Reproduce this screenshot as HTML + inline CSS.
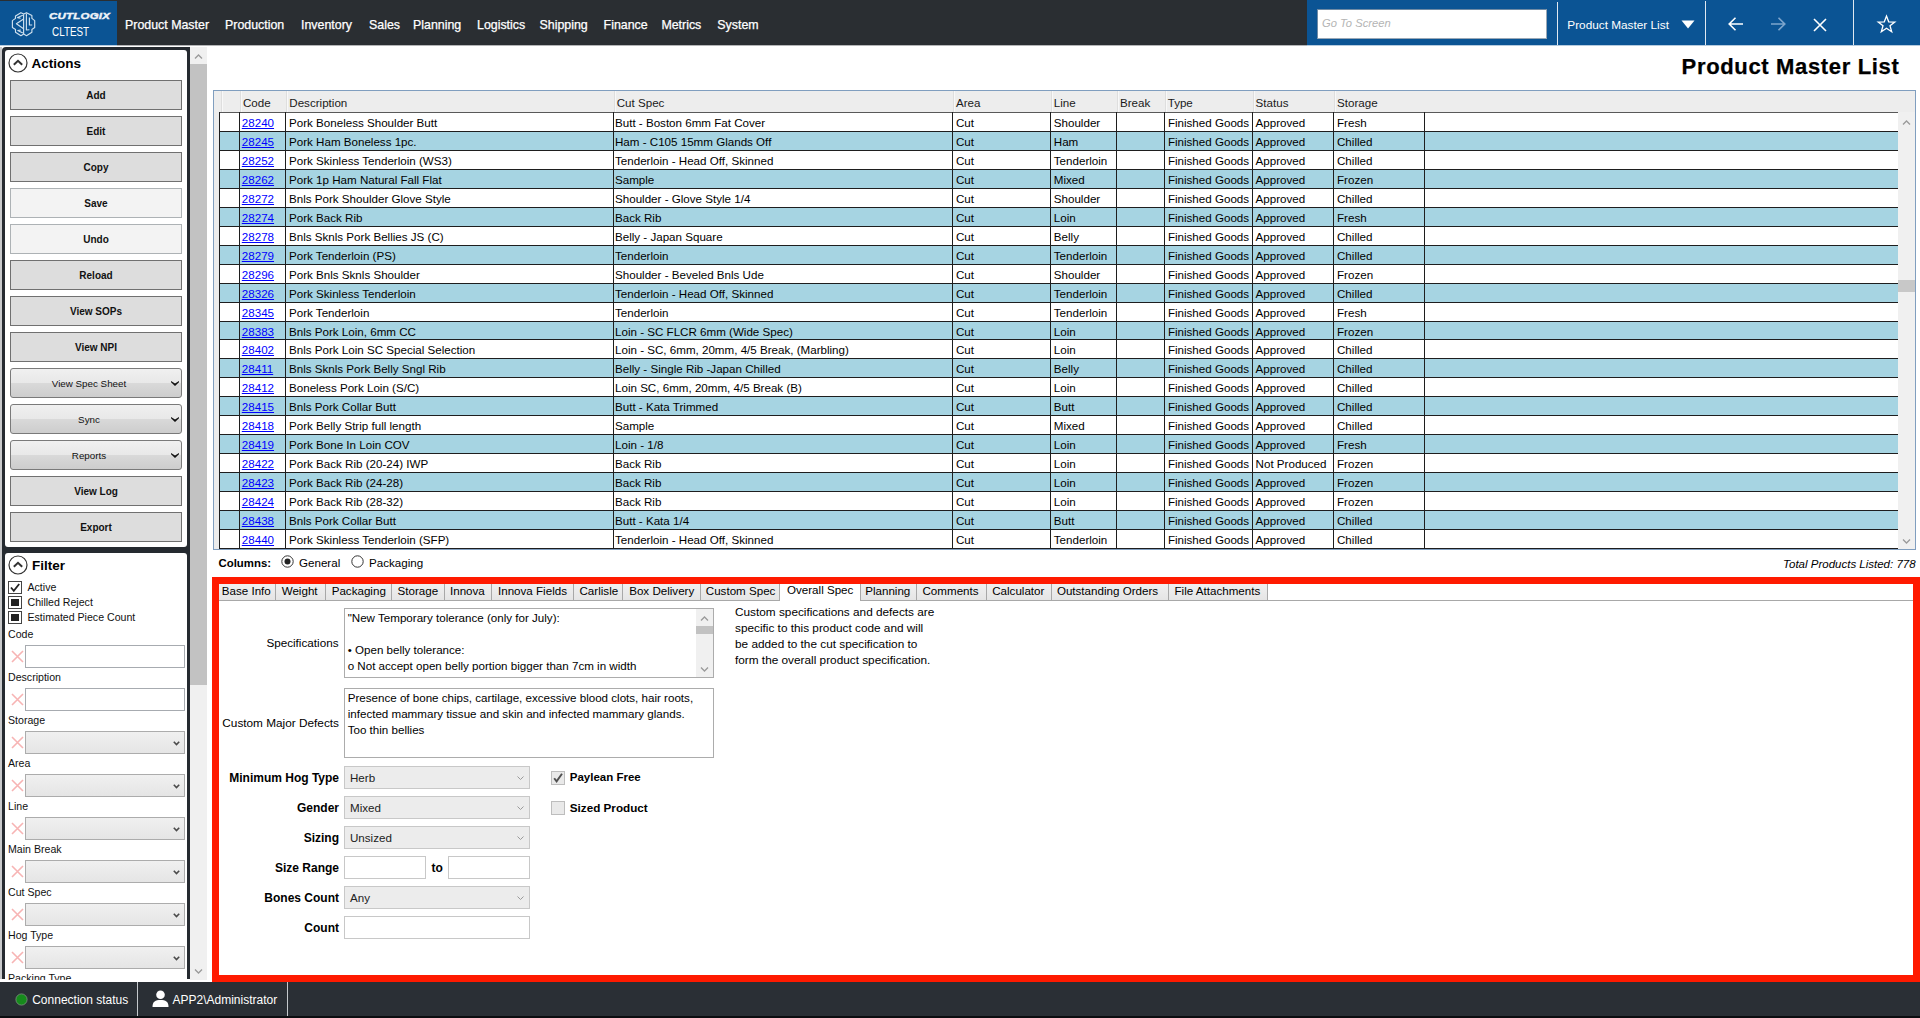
<!DOCTYPE html><html><head><meta charset="utf-8"><style>
*{box-sizing:border-box;margin:0;padding:0}
html,body{width:1920px;height:1018px;overflow:hidden;background:#fff;font-family:"Liberation Sans",sans-serif;color:#000}
.ab{position:absolute}
.t{position:absolute;white-space:nowrap;line-height:1}
svg{position:absolute;overflow:visible}
</style></head><body>

<div class="ab" style="left:0px;top:0px;width:1920px;height:45px;background:#2a2e32"></div>
<div class="ab" style="left:117px;top:45px;width:1190px;height:1px;background:rgba(40,44,48,0.35)"></div>
<div class="ab" style="left:0px;top:45px;width:117px;height:1px;background:rgba(11,84,148,0.3)"></div>
<div class="ab" style="left:1307px;top:45px;width:613px;height:1px;background:rgba(11,84,148,0.3)"></div>
<div class="ab" style="left:0px;top:1px;width:117px;height:44px;background:#0b5494"></div>
<div class="ab" style="left:1307px;top:0px;width:613px;height:45px;background:#0b5494"></div>
<svg style="left:8px;top:8px" width="32" height="32" viewBox="0 0 32 32" fill="none" stroke="#cfe0ee" stroke-width="1.15" stroke-linejoin="round">
<path d="M4.4 12.6 L7.5 10.4 L7.5 7.9 L12.9 4.7 L15.7 6 L18.5 4.7 L23.9 7.5 L23.9 10.4 L26.7 12.6 L26.7 19.5 L23.9 21.4 L23.9 24.2 L18.5 27.7 L15.7 26.1 L12.9 27.7 L7.5 24.2 L7.5 21.4 L4.4 19.5 Z"/>
<path d="M15.6 6.2 L15.6 26"/>
<path d="M15.2 11.2 L8.4 15.8 L15.2 20.4"/>
<path d="M14.8 7.2 L9.6 9.6 L12.6 10.2 M14.8 25 L9.8 22.6 L12.8 22"/>
<path d="M18.4 5.6 L18.4 22 L21.4 21.8 M21.4 9.6 L21.4 17 L24.2 17"/>
</svg>
<div class="t" style="top:11.00px;font-size:9.8px;font-weight:bold;left:49px;color:#eef3f8;font-style:italic;letter-spacing:0.2px;transform:scaleX(1.17);transform-origin:left;-webkit-text-stroke:0.45px #eef3f8">CUTLOGIX</div>
<div class="t" style="top:25.20px;font-size:13px;left:51.8px;color:#fff;transform:scaleX(0.76);transform-origin:left">CLTEST</div>
<div class="t" style="top:18.90px;font-size:12.4px;left:125px;color:#fff;-webkit-text-stroke:0.25px #fff">Product Master</div>
<div class="t" style="top:18.90px;font-size:12.4px;left:225px;color:#fff;-webkit-text-stroke:0.25px #fff">Production</div>
<div class="t" style="top:18.90px;font-size:12.4px;left:301px;color:#fff;-webkit-text-stroke:0.25px #fff">Inventory</div>
<div class="t" style="top:18.90px;font-size:12.4px;left:369px;color:#fff;-webkit-text-stroke:0.25px #fff">Sales</div>
<div class="t" style="top:18.90px;font-size:12.4px;left:413px;color:#fff;-webkit-text-stroke:0.25px #fff">Planning</div>
<div class="t" style="top:18.90px;font-size:12.4px;left:477px;color:#fff;-webkit-text-stroke:0.25px #fff">Logistics</div>
<div class="t" style="top:18.90px;font-size:12.4px;left:539.5px;color:#fff;-webkit-text-stroke:0.25px #fff">Shipping</div>
<div class="t" style="top:18.90px;font-size:12.4px;left:603.6px;color:#fff;-webkit-text-stroke:0.25px #fff">Finance</div>
<div class="t" style="top:18.90px;font-size:12.4px;left:661.4px;color:#fff;-webkit-text-stroke:0.25px #fff">Metrics</div>
<div class="t" style="top:18.90px;font-size:12.4px;left:717.3px;color:#fff;-webkit-text-stroke:0.25px #fff">System</div>
<div class="ab" style="left:1317px;top:9px;width:230px;height:30px;background:#fff;border:1px solid #9aa8b6;border-top-color:#6f8aa4;border-left-color:#6f8aa4"></div>
<div class="t" style="top:17.72px;font-size:11.2px;font-style:italic;left:1322px;color:#b4b4b4">Go To Screen</div>
<div class="ab" style="left:1557px;top:2px;width:1px;height:43px;background:#dfe8f1"></div>
<div class="t" style="top:19.91px;font-size:11.8px;left:1567.3px;color:#fff">Product Master List</div>
<svg style="left:1681px;top:20px" width="14" height="9"><path d="M0.5 0.5 L13.5 0.5 L7 8.5 Z" fill="#fff"/></svg>
<div class="ab" style="left:1705px;top:1px;width:1px;height:44px;background:#dfe8f1"></div>
<div class="ab" style="left:1853px;top:0px;width:1px;height:45px;background:#dfe8f1"></div>
<svg style="left:1728px;top:17px" width="16" height="14" fill="none" stroke="#fff" stroke-width="1.6"><path d="M1 7 L15 7 M7.5 0.8 L1.2 7 L7.5 13.2"/></svg>
<svg style="left:1770px;top:17px" width="16" height="14" fill="none" stroke="#7ea5cc" stroke-width="1.6"><path d="M15 7 L1 7 M8.5 0.8 L14.8 7 L8.5 13.2"/></svg>
<svg style="left:1813px;top:17.5px" width="14" height="14" fill="none" stroke="#fff" stroke-width="1.6"><path d="M1 1 L13 13 M13 1 L1 13"/></svg>
<svg style="left:1877px;top:15px" width="19" height="18" fill="none" stroke="#fff" stroke-width="1.3" stroke-linejoin="miter"><path d="M9.5 1 L11.7 6.8 L17.8 7 L13 10.8 L14.7 16.8 L9.5 13.3 L4.3 16.8 L6 10.8 L1.2 7 L7.3 6.8 Z"/></svg>
<div class="ab" style="left:0px;top:47px;width:2px;height:935px;background:#c8c9cb"></div>
<div class="ab" style="left:2px;top:47px;width:188px;height:933px;background:#252a30;border-radius:4px 0 0 0"></div>
<div class="ab" style="left:5px;top:50px;width:182px;height:497px;background:#fff;border-radius:3px"></div>
<div class="ab" style="left:5px;top:553px;width:182px;height:427px;background:#fff;border-radius:3px 3px 0 0"></div>
<div class="ab" style="left:0px;top:979px;width:207px;height:3px;background:#fff"></div>
<div class="ab" style="left:190px;top:47px;width:17px;height:933px;background:#f0f0f0"></div>
<div class="ab" style="left:190px;top:64px;width:17px;height:621px;background:#c2c2c2"></div>
<svg style="left:193px;top:53px" width="11" height="7" fill="none" stroke="#9a9a9a" stroke-width="1.3"><path d="M2 5.5 L5.5 2 L9 5.5"/></svg>
<svg style="left:193px;top:968px" width="11" height="7" fill="none" stroke="#9a9a9a" stroke-width="1.3"><path d="M2 1.5 L5.5 5 L9 1.5"/></svg>
<svg style="left:7.800000000000001px;top:52.6px" width="20" height="20" fill="none" stroke="#333" ><circle cx="10" cy="10" r="9" stroke-width="1.2"/><path d="M5.8 11.8 L10 7.8 L14.2 11.8" stroke-width="2"/></svg>
<div class="t" style="top:56.57px;font-size:13.5px;font-weight:bold;left:31.5px;">Actions</div>
<div class="ab" style="left:10px;top:80px;width:172px;height:30px;border:1px solid #707070;background:#dddddd"></div>
<div class="t" style="top:90.53px;font-size:10px;font-weight:bold;left:96px;transform:translateX(-50%);color:#111">Add</div>
<div class="ab" style="left:10px;top:116px;width:172px;height:30px;border:1px solid #707070;background:#dddddd"></div>
<div class="t" style="top:126.53px;font-size:10px;font-weight:bold;left:96px;transform:translateX(-50%);color:#111">Edit</div>
<div class="ab" style="left:10px;top:152px;width:172px;height:30px;border:1px solid #707070;background:#dddddd"></div>
<div class="t" style="top:162.53px;font-size:10px;font-weight:bold;left:96px;transform:translateX(-50%);color:#111">Copy</div>
<div class="ab" style="left:10px;top:188px;width:172px;height:30px;border:1px solid #adb2b5;background:#f3f3f3"></div>
<div class="t" style="top:198.53px;font-size:10px;font-weight:bold;left:96px;transform:translateX(-50%);color:#111">Save</div>
<div class="ab" style="left:10px;top:224px;width:172px;height:30px;border:1px solid #adb2b5;background:#f3f3f3"></div>
<div class="t" style="top:234.53px;font-size:10px;font-weight:bold;left:96px;transform:translateX(-50%);color:#111">Undo</div>
<div class="ab" style="left:10px;top:260px;width:172px;height:30px;border:1px solid #707070;background:#dddddd"></div>
<div class="t" style="top:270.54px;font-size:10px;font-weight:bold;left:96px;transform:translateX(-50%);color:#111">Reload</div>
<div class="ab" style="left:10px;top:296px;width:172px;height:30px;border:1px solid #707070;background:#dddddd"></div>
<div class="t" style="top:306.54px;font-size:10px;font-weight:bold;left:96px;transform:translateX(-50%);color:#111">View SOPs</div>
<div class="ab" style="left:10px;top:332px;width:172px;height:30px;border:1px solid #707070;background:#dddddd"></div>
<div class="t" style="top:342.54px;font-size:10px;font-weight:bold;left:96px;transform:translateX(-50%);color:#111">View NPI</div>
<div class="ab" style="left:10px;top:368px;width:172px;height:30px;border:1px solid #7a7a7a;border-radius:3px;background:linear-gradient(#f0f0f0 0%,#e8e8e8 50%,#d9d9d9 51%,#cdcdcd 100%)"></div>
<div class="t" style="top:378.70px;font-size:9.8px;left:89px;transform:translateX(-50%);color:#111">View Spec Sheet</div>
<svg style="left:171px;top:380.5px" width="8" height="5"><path d="M0 0 L4 2.6 L8 0 L8 1.2 L4 5 L0 1.2 Z" fill="#111"/></svg>
<div class="ab" style="left:10px;top:404px;width:172px;height:30px;border:1px solid #7a7a7a;border-radius:3px;background:linear-gradient(#f0f0f0 0%,#e8e8e8 50%,#d9d9d9 51%,#cdcdcd 100%)"></div>
<div class="t" style="top:414.70px;font-size:9.8px;left:89px;transform:translateX(-50%);color:#111">Sync</div>
<svg style="left:171px;top:416.5px" width="8" height="5"><path d="M0 0 L4 2.6 L8 0 L8 1.2 L4 5 L0 1.2 Z" fill="#111"/></svg>
<div class="ab" style="left:10px;top:440px;width:172px;height:30px;border:1px solid #7a7a7a;border-radius:3px;background:linear-gradient(#f0f0f0 0%,#e8e8e8 50%,#d9d9d9 51%,#cdcdcd 100%)"></div>
<div class="t" style="top:450.70px;font-size:9.8px;left:89px;transform:translateX(-50%);color:#111">Reports</div>
<svg style="left:171px;top:452.5px" width="8" height="5"><path d="M0 0 L4 2.6 L8 0 L8 1.2 L4 5 L0 1.2 Z" fill="#111"/></svg>
<div class="ab" style="left:10px;top:476px;width:172px;height:30px;border:1px solid #707070;background:#dddddd"></div>
<div class="t" style="top:486.54px;font-size:10px;font-weight:bold;left:96px;transform:translateX(-50%);color:#111">View Log</div>
<div class="ab" style="left:10px;top:512px;width:172px;height:30px;border:1px solid #707070;background:#dddddd"></div>
<div class="t" style="top:522.53px;font-size:10px;font-weight:bold;left:96px;transform:translateX(-50%);color:#111">Export</div>
<svg style="left:7.5px;top:555.4px" width="20" height="20" fill="none" stroke="#333" ><circle cx="10" cy="10" r="9" stroke-width="1.2"/><path d="M5.8 11.8 L10 7.8 L14.2 11.8" stroke-width="2"/></svg>
<div class="t" style="top:559.47px;font-size:13.5px;font-weight:bold;left:32px;">Filter</div>
<div class="ab" style="left:8px;top:581px;width:14px;height:13px;border:1px solid #444;background:#fff"></div>
<svg style="left:9px;top:582px" width="12" height="11" fill="none" stroke="#222" stroke-width="1.8"><path d="M2 5.5 L4.8 8.8 L10.2 2"/></svg>
<div class="t" style="top:582.03px;font-size:10.6px;left:27.5px;color:#111">Active</div>
<div class="ab" style="left:8px;top:596px;width:14px;height:13px;border:1px solid #444;background:#fff"></div>
<div class="ab" style="left:11px;top:599px;width:8px;height:7px;background:#222"></div>
<div class="t" style="top:597.03px;font-size:10.6px;left:27.5px;color:#111">Chilled Reject</div>
<div class="ab" style="left:8px;top:611px;width:14px;height:13px;border:1px solid #444;background:#fff"></div>
<div class="ab" style="left:11px;top:614px;width:8px;height:7px;background:#222"></div>
<div class="t" style="top:612.03px;font-size:10.6px;left:27.5px;color:#111">Estimated Piece Count</div>
<div class="t" style="top:629.03px;font-size:10.6px;left:8px;color:#111">Code</div>
<svg style="left:10.5px;top:650px" width="13" height="13" fill="none" stroke="#f7b4b4" stroke-width="1.6"><path d="M1 1 L12 12 M12 1 L1 12"/></svg>
<div class="ab" style="left:25px;top:645px;width:160px;height:23px;border:1px solid #a7abb0;background:#fff"></div>
<div class="t" style="top:672.03px;font-size:10.6px;left:8px;color:#111">Description</div>
<svg style="left:10.5px;top:693px" width="13" height="13" fill="none" stroke="#f7b4b4" stroke-width="1.6"><path d="M1 1 L12 12 M12 1 L1 12"/></svg>
<div class="ab" style="left:25px;top:688px;width:160px;height:23px;border:1px solid #a7abb0;background:#fff"></div>
<div class="t" style="top:715.03px;font-size:10.6px;left:8px;color:#111">Storage</div>
<svg style="left:10.5px;top:736px" width="13" height="13" fill="none" stroke="#f7b4b4" stroke-width="1.6"><path d="M1 1 L12 12 M12 1 L1 12"/></svg>
<div class="ab" style="left:25px;top:731px;width:160px;height:23px;border:1px solid #acacac;background:linear-gradient(#f0f0f0,#e5e5e5)"></div>
<svg style="left:172.5px;top:740.5px" width="7" height="5" fill="none" stroke="#4a4a4a" stroke-width="1.6"><path d="M0.8 0.8 L3.5 3.6 L6.2 0.8"/></svg>
<div class="t" style="top:758.03px;font-size:10.6px;left:8px;color:#111">Area</div>
<svg style="left:10.5px;top:779px" width="13" height="13" fill="none" stroke="#f7b4b4" stroke-width="1.6"><path d="M1 1 L12 12 M12 1 L1 12"/></svg>
<div class="ab" style="left:25px;top:774px;width:160px;height:23px;border:1px solid #acacac;background:linear-gradient(#f0f0f0,#e5e5e5)"></div>
<svg style="left:172.5px;top:783.5px" width="7" height="5" fill="none" stroke="#4a4a4a" stroke-width="1.6"><path d="M0.8 0.8 L3.5 3.6 L6.2 0.8"/></svg>
<div class="t" style="top:801.03px;font-size:10.6px;left:8px;color:#111">Line</div>
<svg style="left:10.5px;top:822px" width="13" height="13" fill="none" stroke="#f7b4b4" stroke-width="1.6"><path d="M1 1 L12 12 M12 1 L1 12"/></svg>
<div class="ab" style="left:25px;top:817px;width:160px;height:23px;border:1px solid #acacac;background:linear-gradient(#f0f0f0,#e5e5e5)"></div>
<svg style="left:172.5px;top:826.5px" width="7" height="5" fill="none" stroke="#4a4a4a" stroke-width="1.6"><path d="M0.8 0.8 L3.5 3.6 L6.2 0.8"/></svg>
<div class="t" style="top:844.03px;font-size:10.6px;left:8px;color:#111">Main Break</div>
<svg style="left:10.5px;top:865px" width="13" height="13" fill="none" stroke="#f7b4b4" stroke-width="1.6"><path d="M1 1 L12 12 M12 1 L1 12"/></svg>
<div class="ab" style="left:25px;top:860px;width:160px;height:23px;border:1px solid #acacac;background:linear-gradient(#f0f0f0,#e5e5e5)"></div>
<svg style="left:172.5px;top:869.5px" width="7" height="5" fill="none" stroke="#4a4a4a" stroke-width="1.6"><path d="M0.8 0.8 L3.5 3.6 L6.2 0.8"/></svg>
<div class="t" style="top:887.03px;font-size:10.6px;left:8px;color:#111">Cut Spec</div>
<svg style="left:10.5px;top:908px" width="13" height="13" fill="none" stroke="#f7b4b4" stroke-width="1.6"><path d="M1 1 L12 12 M12 1 L1 12"/></svg>
<div class="ab" style="left:25px;top:903px;width:160px;height:23px;border:1px solid #acacac;background:linear-gradient(#f0f0f0,#e5e5e5)"></div>
<svg style="left:172.5px;top:912.5px" width="7" height="5" fill="none" stroke="#4a4a4a" stroke-width="1.6"><path d="M0.8 0.8 L3.5 3.6 L6.2 0.8"/></svg>
<div class="t" style="top:930.03px;font-size:10.6px;left:8px;color:#111">Hog Type</div>
<svg style="left:10.5px;top:951px" width="13" height="13" fill="none" stroke="#f7b4b4" stroke-width="1.6"><path d="M1 1 L12 12 M12 1 L1 12"/></svg>
<div class="ab" style="left:25px;top:946px;width:160px;height:23px;border:1px solid #acacac;background:linear-gradient(#f0f0f0,#e5e5e5)"></div>
<svg style="left:172.5px;top:955.5px" width="7" height="5" fill="none" stroke="#4a4a4a" stroke-width="1.6"><path d="M0.8 0.8 L3.5 3.6 L6.2 0.8"/></svg>
<div class="t" style="top:973.03px;font-size:10.6px;left:8px;color:#111">Packing Type</div>
<div class="ab" style="left:5px;top:980px;width:185px;height:2px;background:#fff"></div>
<div class="t" style="top:55.98px;font-size:22px;font-weight:bold;right:20.5px;letter-spacing:0.66px;-webkit-text-stroke:0.25px #000">Product Master List</div>
<div class="ab" style="left:213px;top:90px;width:1703px;height:460px;border:1px solid #809ebf;background:#ededed"></div>
<div class="ab" style="left:214px;top:112px;width:5px;height:437px;background:#ececec"></div>
<div class="ab" style="left:219px;top:112px;width:1679px;height:19px;background:#fff"></div>
<div class="ab" style="left:219px;top:131px;width:1679px;height:19px;background:#a6d4e2"></div>
<div class="ab" style="left:219px;top:150px;width:1679px;height:19px;background:#fff"></div>
<div class="ab" style="left:219px;top:169px;width:1679px;height:19px;background:#a6d4e2"></div>
<div class="ab" style="left:219px;top:188px;width:1679px;height:19px;background:#fff"></div>
<div class="ab" style="left:219px;top:207px;width:1679px;height:19px;background:#a6d4e2"></div>
<div class="ab" style="left:219px;top:226px;width:1679px;height:19px;background:#fff"></div>
<div class="ab" style="left:219px;top:245px;width:1679px;height:19px;background:#a6d4e2"></div>
<div class="ab" style="left:219px;top:264px;width:1679px;height:19px;background:#fff"></div>
<div class="ab" style="left:219px;top:283px;width:1679px;height:19px;background:#a6d4e2"></div>
<div class="ab" style="left:219px;top:302px;width:1679px;height:19px;background:#fff"></div>
<div class="ab" style="left:219px;top:321px;width:1679px;height:18px;background:#a6d4e2"></div>
<div class="ab" style="left:219px;top:339px;width:1679px;height:19px;background:#fff"></div>
<div class="ab" style="left:219px;top:358px;width:1679px;height:19px;background:#a6d4e2"></div>
<div class="ab" style="left:219px;top:377px;width:1679px;height:19px;background:#fff"></div>
<div class="ab" style="left:219px;top:396px;width:1679px;height:19px;background:#a6d4e2"></div>
<div class="ab" style="left:219px;top:415px;width:1679px;height:19px;background:#fff"></div>
<div class="ab" style="left:219px;top:434px;width:1679px;height:19px;background:#a6d4e2"></div>
<div class="ab" style="left:219px;top:453px;width:1679px;height:19px;background:#fff"></div>
<div class="ab" style="left:219px;top:472px;width:1679px;height:19px;background:#a6d4e2"></div>
<div class="ab" style="left:219px;top:491px;width:1679px;height:19px;background:#fff"></div>
<div class="ab" style="left:219px;top:510px;width:1679px;height:19px;background:#a6d4e2"></div>
<div class="ab" style="left:219px;top:529px;width:1679px;height:19px;background:#fff"></div>
<div class="ab" style="left:219px;top:112px;width:1679px;height:1px;background:#595959"></div>
<div class="ab" style="left:219px;top:131px;width:1679px;height:1px;background:#1e1e1e"></div>
<div class="ab" style="left:219px;top:150px;width:1679px;height:1px;background:#1e1e1e"></div>
<div class="ab" style="left:219px;top:169px;width:1679px;height:1px;background:#1e1e1e"></div>
<div class="ab" style="left:219px;top:188px;width:1679px;height:1px;background:#1e1e1e"></div>
<div class="ab" style="left:219px;top:207px;width:1679px;height:1px;background:#1e1e1e"></div>
<div class="ab" style="left:219px;top:226px;width:1679px;height:1px;background:#1e1e1e"></div>
<div class="ab" style="left:219px;top:245px;width:1679px;height:1px;background:#1e1e1e"></div>
<div class="ab" style="left:219px;top:264px;width:1679px;height:1px;background:#1e1e1e"></div>
<div class="ab" style="left:219px;top:283px;width:1679px;height:1px;background:#1e1e1e"></div>
<div class="ab" style="left:219px;top:302px;width:1679px;height:1px;background:#1e1e1e"></div>
<div class="ab" style="left:219px;top:321px;width:1679px;height:1px;background:#1e1e1e"></div>
<div class="ab" style="left:219px;top:339px;width:1679px;height:1px;background:#1e1e1e"></div>
<div class="ab" style="left:219px;top:358px;width:1679px;height:1px;background:#1e1e1e"></div>
<div class="ab" style="left:219px;top:377px;width:1679px;height:1px;background:#1e1e1e"></div>
<div class="ab" style="left:219px;top:396px;width:1679px;height:1px;background:#1e1e1e"></div>
<div class="ab" style="left:219px;top:415px;width:1679px;height:1px;background:#1e1e1e"></div>
<div class="ab" style="left:219px;top:434px;width:1679px;height:1px;background:#1e1e1e"></div>
<div class="ab" style="left:219px;top:453px;width:1679px;height:1px;background:#1e1e1e"></div>
<div class="ab" style="left:219px;top:472px;width:1679px;height:1px;background:#1e1e1e"></div>
<div class="ab" style="left:219px;top:491px;width:1679px;height:1px;background:#1e1e1e"></div>
<div class="ab" style="left:219px;top:510px;width:1679px;height:1px;background:#1e1e1e"></div>
<div class="ab" style="left:219px;top:529px;width:1679px;height:1px;background:#1e1e1e"></div>
<div class="ab" style="left:219px;top:548px;width:1679px;height:1px;background:#1e1e1e"></div>
<div class="ab" style="left:219px;top:112px;width:1px;height:437px;background:#1e1e1e"></div>
<div class="ab" style="left:239px;top:112px;width:1px;height:437px;background:#1e1e1e"></div>
<div class="ab" style="left:285px;top:112px;width:1px;height:437px;background:#1e1e1e"></div>
<div class="ab" style="left:613px;top:112px;width:1px;height:437px;background:#1e1e1e"></div>
<div class="ab" style="left:952px;top:112px;width:1px;height:437px;background:#1e1e1e"></div>
<div class="ab" style="left:1050px;top:112px;width:1px;height:437px;background:#1e1e1e"></div>
<div class="ab" style="left:1116px;top:112px;width:1px;height:437px;background:#1e1e1e"></div>
<div class="ab" style="left:1164px;top:112px;width:1px;height:437px;background:#1e1e1e"></div>
<div class="ab" style="left:1252px;top:112px;width:1px;height:437px;background:#1e1e1e"></div>
<div class="ab" style="left:1333px;top:112px;width:1px;height:437px;background:#1e1e1e"></div>
<div class="ab" style="left:1424px;top:112px;width:1px;height:437px;background:#1e1e1e"></div>
<div class="t" style="top:97.18px;font-size:11.6px;left:243px;color:#1a1a1a">Code</div>
<div class="t" style="top:97.18px;font-size:11.6px;left:289.3px;color:#1a1a1a">Description</div>
<div class="t" style="top:97.18px;font-size:11.6px;left:616.7px;color:#1a1a1a">Cut Spec</div>
<div class="t" style="top:97.18px;font-size:11.6px;left:956px;color:#1a1a1a">Area</div>
<div class="t" style="top:97.18px;font-size:11.6px;left:1053.8px;color:#1a1a1a">Line</div>
<div class="t" style="top:97.18px;font-size:11.6px;left:1120px;color:#1a1a1a">Break</div>
<div class="t" style="top:97.18px;font-size:11.6px;left:1167.7px;color:#1a1a1a">Type</div>
<div class="t" style="top:97.18px;font-size:11.6px;left:1255.6px;color:#1a1a1a">Status</div>
<div class="t" style="top:97.18px;font-size:11.6px;left:1337px;color:#1a1a1a">Storage</div>
<div class="ab" style="left:221px;top:91px;width:1px;height:21px;background:#dedede"></div>
<div class="ab" style="left:222px;top:91px;width:1px;height:21px;background:#f8f8f8"></div>
<div class="ab" style="left:240px;top:91px;width:1px;height:21px;background:#dedede"></div>
<div class="ab" style="left:241px;top:91px;width:1px;height:21px;background:#f8f8f8"></div>
<div class="ab" style="left:286px;top:91px;width:1px;height:21px;background:#dedede"></div>
<div class="ab" style="left:287px;top:91px;width:1px;height:21px;background:#f8f8f8"></div>
<div class="ab" style="left:614px;top:91px;width:1px;height:21px;background:#dedede"></div>
<div class="ab" style="left:615px;top:91px;width:1px;height:21px;background:#f8f8f8"></div>
<div class="ab" style="left:953px;top:91px;width:1px;height:21px;background:#dedede"></div>
<div class="ab" style="left:954px;top:91px;width:1px;height:21px;background:#f8f8f8"></div>
<div class="ab" style="left:1051px;top:91px;width:1px;height:21px;background:#dedede"></div>
<div class="ab" style="left:1052px;top:91px;width:1px;height:21px;background:#f8f8f8"></div>
<div class="ab" style="left:1117px;top:91px;width:1px;height:21px;background:#dedede"></div>
<div class="ab" style="left:1118px;top:91px;width:1px;height:21px;background:#f8f8f8"></div>
<div class="ab" style="left:1165px;top:91px;width:1px;height:21px;background:#dedede"></div>
<div class="ab" style="left:1166px;top:91px;width:1px;height:21px;background:#f8f8f8"></div>
<div class="ab" style="left:1253px;top:91px;width:1px;height:21px;background:#dedede"></div>
<div class="ab" style="left:1254px;top:91px;width:1px;height:21px;background:#f8f8f8"></div>
<div class="ab" style="left:1334px;top:91px;width:1px;height:21px;background:#dedede"></div>
<div class="ab" style="left:1335px;top:91px;width:1px;height:21px;background:#f8f8f8"></div>
<div class="t" style="top:117.18px;font-size:11.6px;left:241.8px;color:#0000ff;text-decoration:underline">28240</div>
<div class="t" style="top:117.18px;font-size:11.6px;left:289px;">Pork Boneless Shoulder Butt</div>
<div class="t" style="top:117.18px;font-size:11.6px;left:615px;">Butt - Boston 6mm Fat Cover</div>
<div class="t" style="top:117.18px;font-size:11.6px;left:956px;">Cut</div>
<div class="t" style="top:117.18px;font-size:11.6px;left:1053.8px;">Shoulder</div>
<div class="t" style="top:117.18px;font-size:11.6px;left:1167.9px;">Finished Goods</div>
<div class="t" style="top:117.18px;font-size:11.6px;left:1255.6px;">Approved</div>
<div class="t" style="top:117.18px;font-size:11.6px;left:1337px;">Fresh</div>
<div class="t" style="top:136.18px;font-size:11.6px;left:241.8px;color:#0000ff;text-decoration:underline">28245</div>
<div class="t" style="top:136.18px;font-size:11.6px;left:289px;">Pork Ham Boneless 1pc.</div>
<div class="t" style="top:136.18px;font-size:11.6px;left:615px;">Ham - C105 15mm Glands Off</div>
<div class="t" style="top:136.18px;font-size:11.6px;left:956px;">Cut</div>
<div class="t" style="top:136.18px;font-size:11.6px;left:1053.8px;">Ham</div>
<div class="t" style="top:136.18px;font-size:11.6px;left:1167.9px;">Finished Goods</div>
<div class="t" style="top:136.18px;font-size:11.6px;left:1255.6px;">Approved</div>
<div class="t" style="top:136.18px;font-size:11.6px;left:1337px;">Chilled</div>
<div class="t" style="top:155.18px;font-size:11.6px;left:241.8px;color:#0000ff;text-decoration:underline">28252</div>
<div class="t" style="top:155.18px;font-size:11.6px;left:289px;">Pork Skinless Tenderloin (WS3)</div>
<div class="t" style="top:155.18px;font-size:11.6px;left:615px;">Tenderloin - Head Off, Skinned</div>
<div class="t" style="top:155.18px;font-size:11.6px;left:956px;">Cut</div>
<div class="t" style="top:155.18px;font-size:11.6px;left:1053.8px;">Tenderloin</div>
<div class="t" style="top:155.18px;font-size:11.6px;left:1167.9px;">Finished Goods</div>
<div class="t" style="top:155.18px;font-size:11.6px;left:1255.6px;">Approved</div>
<div class="t" style="top:155.18px;font-size:11.6px;left:1337px;">Chilled</div>
<div class="t" style="top:174.18px;font-size:11.6px;left:241.8px;color:#0000ff;text-decoration:underline">28262</div>
<div class="t" style="top:174.18px;font-size:11.6px;left:289px;">Pork 1p Ham Natural Fall Flat</div>
<div class="t" style="top:174.18px;font-size:11.6px;left:615px;">Sample</div>
<div class="t" style="top:174.18px;font-size:11.6px;left:956px;">Cut</div>
<div class="t" style="top:174.18px;font-size:11.6px;left:1053.8px;">Mixed</div>
<div class="t" style="top:174.18px;font-size:11.6px;left:1167.9px;">Finished Goods</div>
<div class="t" style="top:174.18px;font-size:11.6px;left:1255.6px;">Approved</div>
<div class="t" style="top:174.18px;font-size:11.6px;left:1337px;">Frozen</div>
<div class="t" style="top:193.18px;font-size:11.6px;left:241.8px;color:#0000ff;text-decoration:underline">28272</div>
<div class="t" style="top:193.18px;font-size:11.6px;left:289px;">Bnls Pork Shoulder Glove Style</div>
<div class="t" style="top:193.18px;font-size:11.6px;left:615px;">Shoulder - Glove Style 1/4</div>
<div class="t" style="top:193.18px;font-size:11.6px;left:956px;">Cut</div>
<div class="t" style="top:193.18px;font-size:11.6px;left:1053.8px;">Shoulder</div>
<div class="t" style="top:193.18px;font-size:11.6px;left:1167.9px;">Finished Goods</div>
<div class="t" style="top:193.18px;font-size:11.6px;left:1255.6px;">Approved</div>
<div class="t" style="top:193.18px;font-size:11.6px;left:1337px;">Chilled</div>
<div class="t" style="top:212.18px;font-size:11.6px;left:241.8px;color:#0000ff;text-decoration:underline">28274</div>
<div class="t" style="top:212.18px;font-size:11.6px;left:289px;">Pork Back Rib</div>
<div class="t" style="top:212.18px;font-size:11.6px;left:615px;">Back Rib</div>
<div class="t" style="top:212.18px;font-size:11.6px;left:956px;">Cut</div>
<div class="t" style="top:212.18px;font-size:11.6px;left:1053.8px;">Loin</div>
<div class="t" style="top:212.18px;font-size:11.6px;left:1167.9px;">Finished Goods</div>
<div class="t" style="top:212.18px;font-size:11.6px;left:1255.6px;">Approved</div>
<div class="t" style="top:212.18px;font-size:11.6px;left:1337px;">Fresh</div>
<div class="t" style="top:231.18px;font-size:11.6px;left:241.8px;color:#0000ff;text-decoration:underline">28278</div>
<div class="t" style="top:231.18px;font-size:11.6px;left:289px;">Bnls Sknls Pork Bellies JS (C)</div>
<div class="t" style="top:231.18px;font-size:11.6px;left:615px;">Belly - Japan Square</div>
<div class="t" style="top:231.18px;font-size:11.6px;left:956px;">Cut</div>
<div class="t" style="top:231.18px;font-size:11.6px;left:1053.8px;">Belly</div>
<div class="t" style="top:231.18px;font-size:11.6px;left:1167.9px;">Finished Goods</div>
<div class="t" style="top:231.18px;font-size:11.6px;left:1255.6px;">Approved</div>
<div class="t" style="top:231.18px;font-size:11.6px;left:1337px;">Chilled</div>
<div class="t" style="top:250.18px;font-size:11.6px;left:241.8px;color:#0000ff;text-decoration:underline">28279</div>
<div class="t" style="top:250.18px;font-size:11.6px;left:289px;">Pork Tenderloin (PS)</div>
<div class="t" style="top:250.18px;font-size:11.6px;left:615px;">Tenderloin</div>
<div class="t" style="top:250.18px;font-size:11.6px;left:956px;">Cut</div>
<div class="t" style="top:250.18px;font-size:11.6px;left:1053.8px;">Tenderloin</div>
<div class="t" style="top:250.18px;font-size:11.6px;left:1167.9px;">Finished Goods</div>
<div class="t" style="top:250.18px;font-size:11.6px;left:1255.6px;">Approved</div>
<div class="t" style="top:250.18px;font-size:11.6px;left:1337px;">Chilled</div>
<div class="t" style="top:269.18px;font-size:11.6px;left:241.8px;color:#0000ff;text-decoration:underline">28296</div>
<div class="t" style="top:269.18px;font-size:11.6px;left:289px;">Pork Bnls Sknls Shoulder</div>
<div class="t" style="top:269.18px;font-size:11.6px;left:615px;">Shoulder - Beveled Bnls Ude</div>
<div class="t" style="top:269.18px;font-size:11.6px;left:956px;">Cut</div>
<div class="t" style="top:269.18px;font-size:11.6px;left:1053.8px;">Shoulder</div>
<div class="t" style="top:269.18px;font-size:11.6px;left:1167.9px;">Finished Goods</div>
<div class="t" style="top:269.18px;font-size:11.6px;left:1255.6px;">Approved</div>
<div class="t" style="top:269.18px;font-size:11.6px;left:1337px;">Frozen</div>
<div class="t" style="top:288.18px;font-size:11.6px;left:241.8px;color:#0000ff;text-decoration:underline">28326</div>
<div class="t" style="top:288.18px;font-size:11.6px;left:289px;">Pork Skinless Tenderloin</div>
<div class="t" style="top:288.18px;font-size:11.6px;left:615px;">Tenderloin - Head Off, Skinned</div>
<div class="t" style="top:288.18px;font-size:11.6px;left:956px;">Cut</div>
<div class="t" style="top:288.18px;font-size:11.6px;left:1053.8px;">Tenderloin</div>
<div class="t" style="top:288.18px;font-size:11.6px;left:1167.9px;">Finished Goods</div>
<div class="t" style="top:288.18px;font-size:11.6px;left:1255.6px;">Approved</div>
<div class="t" style="top:288.18px;font-size:11.6px;left:1337px;">Chilled</div>
<div class="t" style="top:307.18px;font-size:11.6px;left:241.8px;color:#0000ff;text-decoration:underline">28345</div>
<div class="t" style="top:307.18px;font-size:11.6px;left:289px;">Pork Tenderloin</div>
<div class="t" style="top:307.18px;font-size:11.6px;left:615px;">Tenderloin</div>
<div class="t" style="top:307.18px;font-size:11.6px;left:956px;">Cut</div>
<div class="t" style="top:307.18px;font-size:11.6px;left:1053.8px;">Tenderloin</div>
<div class="t" style="top:307.18px;font-size:11.6px;left:1167.9px;">Finished Goods</div>
<div class="t" style="top:307.18px;font-size:11.6px;left:1255.6px;">Approved</div>
<div class="t" style="top:307.18px;font-size:11.6px;left:1337px;">Fresh</div>
<div class="t" style="top:326.18px;font-size:11.6px;left:241.8px;color:#0000ff;text-decoration:underline">28383</div>
<div class="t" style="top:326.18px;font-size:11.6px;left:289px;">Bnls Pork Loin, 6mm CC</div>
<div class="t" style="top:326.18px;font-size:11.6px;left:615px;">Loin - SC FLCR 6mm (Wide Spec)</div>
<div class="t" style="top:326.18px;font-size:11.6px;left:956px;">Cut</div>
<div class="t" style="top:326.18px;font-size:11.6px;left:1053.8px;">Loin</div>
<div class="t" style="top:326.18px;font-size:11.6px;left:1167.9px;">Finished Goods</div>
<div class="t" style="top:326.18px;font-size:11.6px;left:1255.6px;">Approved</div>
<div class="t" style="top:326.18px;font-size:11.6px;left:1337px;">Frozen</div>
<div class="t" style="top:344.18px;font-size:11.6px;left:241.8px;color:#0000ff;text-decoration:underline">28402</div>
<div class="t" style="top:344.18px;font-size:11.6px;left:289px;">Bnls Pork Loin SC Special Selection</div>
<div class="t" style="top:344.18px;font-size:11.6px;left:615px;">Loin - SC, 6mm, 20mm, 4/5 Break, (Marbling)</div>
<div class="t" style="top:344.18px;font-size:11.6px;left:956px;">Cut</div>
<div class="t" style="top:344.18px;font-size:11.6px;left:1053.8px;">Loin</div>
<div class="t" style="top:344.18px;font-size:11.6px;left:1167.9px;">Finished Goods</div>
<div class="t" style="top:344.18px;font-size:11.6px;left:1255.6px;">Approved</div>
<div class="t" style="top:344.18px;font-size:11.6px;left:1337px;">Chilled</div>
<div class="t" style="top:363.18px;font-size:11.6px;left:241.8px;color:#0000ff;text-decoration:underline">28411</div>
<div class="t" style="top:363.18px;font-size:11.6px;left:289px;">Bnls Sknls Pork Belly Sngl Rib</div>
<div class="t" style="top:363.18px;font-size:11.6px;left:615px;">Belly - Single Rib -Japan Chilled</div>
<div class="t" style="top:363.18px;font-size:11.6px;left:956px;">Cut</div>
<div class="t" style="top:363.18px;font-size:11.6px;left:1053.8px;">Belly</div>
<div class="t" style="top:363.18px;font-size:11.6px;left:1167.9px;">Finished Goods</div>
<div class="t" style="top:363.18px;font-size:11.6px;left:1255.6px;">Approved</div>
<div class="t" style="top:363.18px;font-size:11.6px;left:1337px;">Chilled</div>
<div class="t" style="top:382.18px;font-size:11.6px;left:241.8px;color:#0000ff;text-decoration:underline">28412</div>
<div class="t" style="top:382.18px;font-size:11.6px;left:289px;">Boneless Pork Loin (S/C)</div>
<div class="t" style="top:382.18px;font-size:11.6px;left:615px;">Loin SC, 6mm, 20mm, 4/5 Break (B)</div>
<div class="t" style="top:382.18px;font-size:11.6px;left:956px;">Cut</div>
<div class="t" style="top:382.18px;font-size:11.6px;left:1053.8px;">Loin</div>
<div class="t" style="top:382.18px;font-size:11.6px;left:1167.9px;">Finished Goods</div>
<div class="t" style="top:382.18px;font-size:11.6px;left:1255.6px;">Approved</div>
<div class="t" style="top:382.18px;font-size:11.6px;left:1337px;">Chilled</div>
<div class="t" style="top:401.18px;font-size:11.6px;left:241.8px;color:#0000ff;text-decoration:underline">28415</div>
<div class="t" style="top:401.18px;font-size:11.6px;left:289px;">Bnls Pork Collar Butt</div>
<div class="t" style="top:401.18px;font-size:11.6px;left:615px;">Butt - Kata Trimmed</div>
<div class="t" style="top:401.18px;font-size:11.6px;left:956px;">Cut</div>
<div class="t" style="top:401.18px;font-size:11.6px;left:1053.8px;">Butt</div>
<div class="t" style="top:401.18px;font-size:11.6px;left:1167.9px;">Finished Goods</div>
<div class="t" style="top:401.18px;font-size:11.6px;left:1255.6px;">Approved</div>
<div class="t" style="top:401.18px;font-size:11.6px;left:1337px;">Chilled</div>
<div class="t" style="top:420.18px;font-size:11.6px;left:241.8px;color:#0000ff;text-decoration:underline">28418</div>
<div class="t" style="top:420.18px;font-size:11.6px;left:289px;">Pork Belly Strip full length</div>
<div class="t" style="top:420.18px;font-size:11.6px;left:615px;">Sample</div>
<div class="t" style="top:420.18px;font-size:11.6px;left:956px;">Cut</div>
<div class="t" style="top:420.18px;font-size:11.6px;left:1053.8px;">Mixed</div>
<div class="t" style="top:420.18px;font-size:11.6px;left:1167.9px;">Finished Goods</div>
<div class="t" style="top:420.18px;font-size:11.6px;left:1255.6px;">Approved</div>
<div class="t" style="top:420.18px;font-size:11.6px;left:1337px;">Chilled</div>
<div class="t" style="top:439.18px;font-size:11.6px;left:241.8px;color:#0000ff;text-decoration:underline">28419</div>
<div class="t" style="top:439.18px;font-size:11.6px;left:289px;">Pork Bone In Loin COV</div>
<div class="t" style="top:439.18px;font-size:11.6px;left:615px;">Loin - 1/8</div>
<div class="t" style="top:439.18px;font-size:11.6px;left:956px;">Cut</div>
<div class="t" style="top:439.18px;font-size:11.6px;left:1053.8px;">Loin</div>
<div class="t" style="top:439.18px;font-size:11.6px;left:1167.9px;">Finished Goods</div>
<div class="t" style="top:439.18px;font-size:11.6px;left:1255.6px;">Approved</div>
<div class="t" style="top:439.18px;font-size:11.6px;left:1337px;">Fresh</div>
<div class="t" style="top:458.18px;font-size:11.6px;left:241.8px;color:#0000ff;text-decoration:underline">28422</div>
<div class="t" style="top:458.18px;font-size:11.6px;left:289px;">Pork Back Rib (20-24) IWP</div>
<div class="t" style="top:458.18px;font-size:11.6px;left:615px;">Back Rib</div>
<div class="t" style="top:458.18px;font-size:11.6px;left:956px;">Cut</div>
<div class="t" style="top:458.18px;font-size:11.6px;left:1053.8px;">Loin</div>
<div class="t" style="top:458.18px;font-size:11.6px;left:1167.9px;">Finished Goods</div>
<div class="t" style="top:458.18px;font-size:11.6px;left:1255.6px;">Not Produced</div>
<div class="t" style="top:458.18px;font-size:11.6px;left:1337px;">Frozen</div>
<div class="t" style="top:477.18px;font-size:11.6px;left:241.8px;color:#0000ff;text-decoration:underline">28423</div>
<div class="t" style="top:477.18px;font-size:11.6px;left:289px;">Pork Back Rib (24-28)</div>
<div class="t" style="top:477.18px;font-size:11.6px;left:615px;">Back Rib</div>
<div class="t" style="top:477.18px;font-size:11.6px;left:956px;">Cut</div>
<div class="t" style="top:477.18px;font-size:11.6px;left:1053.8px;">Loin</div>
<div class="t" style="top:477.18px;font-size:11.6px;left:1167.9px;">Finished Goods</div>
<div class="t" style="top:477.18px;font-size:11.6px;left:1255.6px;">Approved</div>
<div class="t" style="top:477.18px;font-size:11.6px;left:1337px;">Frozen</div>
<div class="t" style="top:496.18px;font-size:11.6px;left:241.8px;color:#0000ff;text-decoration:underline">28424</div>
<div class="t" style="top:496.18px;font-size:11.6px;left:289px;">Pork Back Rib (28-32)</div>
<div class="t" style="top:496.18px;font-size:11.6px;left:615px;">Back Rib</div>
<div class="t" style="top:496.18px;font-size:11.6px;left:956px;">Cut</div>
<div class="t" style="top:496.18px;font-size:11.6px;left:1053.8px;">Loin</div>
<div class="t" style="top:496.18px;font-size:11.6px;left:1167.9px;">Finished Goods</div>
<div class="t" style="top:496.18px;font-size:11.6px;left:1255.6px;">Approved</div>
<div class="t" style="top:496.18px;font-size:11.6px;left:1337px;">Frozen</div>
<div class="t" style="top:515.18px;font-size:11.6px;left:241.8px;color:#0000ff;text-decoration:underline">28438</div>
<div class="t" style="top:515.18px;font-size:11.6px;left:289px;">Bnls Pork Collar Butt</div>
<div class="t" style="top:515.18px;font-size:11.6px;left:615px;">Butt - Kata 1/4</div>
<div class="t" style="top:515.18px;font-size:11.6px;left:956px;">Cut</div>
<div class="t" style="top:515.18px;font-size:11.6px;left:1053.8px;">Butt</div>
<div class="t" style="top:515.18px;font-size:11.6px;left:1167.9px;">Finished Goods</div>
<div class="t" style="top:515.18px;font-size:11.6px;left:1255.6px;">Approved</div>
<div class="t" style="top:515.18px;font-size:11.6px;left:1337px;">Chilled</div>
<div class="t" style="top:534.18px;font-size:11.6px;left:241.8px;color:#0000ff;text-decoration:underline">28440</div>
<div class="t" style="top:534.18px;font-size:11.6px;left:289px;">Pork Skinless Tenderloin (SFP)</div>
<div class="t" style="top:534.18px;font-size:11.6px;left:615px;">Tenderloin - Head Off, Skinned</div>
<div class="t" style="top:534.18px;font-size:11.6px;left:956px;">Cut</div>
<div class="t" style="top:534.18px;font-size:11.6px;left:1053.8px;">Tenderloin</div>
<div class="t" style="top:534.18px;font-size:11.6px;left:1167.9px;">Finished Goods</div>
<div class="t" style="top:534.18px;font-size:11.6px;left:1255.6px;">Approved</div>
<div class="t" style="top:534.18px;font-size:11.6px;left:1337px;">Chilled</div>
<div class="ab" style="left:1898px;top:112px;width:17px;height:437px;background:#f0f0f0"></div>
<div class="ab" style="left:1898px;top:280px;width:17px;height:12px;background:#c8c8c8"></div>
<svg style="left:1901px;top:119px" width="11" height="7" fill="none" stroke="#9a9a9a" stroke-width="1.3"><path d="M2 5.5 L5.5 2 L9 5.5"/></svg>
<svg style="left:1901px;top:538px" width="11" height="7" fill="none" stroke="#9a9a9a" stroke-width="1.3"><path d="M2 1.5 L5.5 5 L9 1.5"/></svg>
<div class="t" style="top:558.35px;font-size:11.4px;font-weight:bold;left:218.5px;">Columns:</div>
<svg style="left:280.6px;top:555.4px" width="13" height="13"><circle cx="6.5" cy="6.5" r="5.7" fill="#fff" stroke="#333" stroke-width="1"/><circle cx="6.5" cy="6.5" r="3" fill="#222"/></svg>
<div class="t" style="top:556.98px;font-size:11.6px;left:299px;">General</div>
<svg style="left:350.6px;top:555.4px" width="13" height="13"><circle cx="6.5" cy="6.5" r="5.7" fill="#fff" stroke="#333" stroke-width="1"/></svg>
<div class="t" style="top:556.98px;font-size:11.6px;left:369px;">Packaging</div>
<div class="t" style="top:559.27px;font-size:11.5px;font-style:italic;right:4.400000000000091px;">Total Products Listed: 778</div>
<div class="ab" style="left:212px;top:577px;width:1708px;height:405px;border:7px solid #ff1a00;background:#fff"></div>
<div class="ab" style="left:219px;top:600px;width:1694px;height:1px;background:#a8a8a8"></div>
<div class="ab" style="left:219px;top:584px;width:57px;height:17px;background:linear-gradient(#f0f0f0,#e5e5e5);border:1px solid #a8a8a8;border-top:none;border-left:none"></div>
<div class="t" style="top:584.58px;font-size:11.6px;left:221.8px;">Base Info</div>
<div class="ab" style="left:275px;top:584px;width:51px;height:17px;background:linear-gradient(#f0f0f0,#e5e5e5);border:1px solid #a8a8a8;border-top:none"></div>
<div class="t" style="top:584.58px;font-size:11.6px;left:281.7px;">Weight</div>
<div class="ab" style="left:325px;top:584px;width:67px;height:17px;background:linear-gradient(#f0f0f0,#e5e5e5);border:1px solid #a8a8a8;border-top:none"></div>
<div class="t" style="top:584.58px;font-size:11.6px;left:331.7px;">Packaging</div>
<div class="ab" style="left:391px;top:584px;width:54px;height:17px;background:linear-gradient(#f0f0f0,#e5e5e5);border:1px solid #a8a8a8;border-top:none"></div>
<div class="t" style="top:584.58px;font-size:11.6px;left:397.5px;">Storage</div>
<div class="ab" style="left:444px;top:584px;width:48px;height:17px;background:linear-gradient(#f0f0f0,#e5e5e5);border:1px solid #a8a8a8;border-top:none"></div>
<div class="t" style="top:584.58px;font-size:11.6px;left:450px;">Innova</div>
<div class="ab" style="left:491px;top:584px;width:83px;height:17px;background:linear-gradient(#f0f0f0,#e5e5e5);border:1px solid #a8a8a8;border-top:none"></div>
<div class="t" style="top:584.58px;font-size:11.6px;left:498px;">Innova Fields</div>
<div class="ab" style="left:573px;top:584px;width:50px;height:17px;background:linear-gradient(#f0f0f0,#e5e5e5);border:1px solid #a8a8a8;border-top:none"></div>
<div class="t" style="top:584.58px;font-size:11.6px;left:579.5px;">Carlisle</div>
<div class="ab" style="left:622px;top:584px;width:79px;height:17px;background:linear-gradient(#f0f0f0,#e5e5e5);border:1px solid #a8a8a8;border-top:none"></div>
<div class="t" style="top:584.58px;font-size:11.6px;left:629.2px;">Box Delivery</div>
<div class="ab" style="left:700px;top:584px;width:80px;height:17px;background:linear-gradient(#f0f0f0,#e5e5e5);border:1px solid #a8a8a8;border-top:none"></div>
<div class="t" style="top:584.58px;font-size:11.6px;left:705.8px;">Custom Spec</div>
<div class="ab" style="left:779px;top:584px;width:82px;height:17px;background:#fff;border-left:1px solid #a8a8a8;border-right:1px solid #a8a8a8"></div>
<div class="t" style="top:583.78px;font-size:11.6px;left:787px;">Overall Spec</div>
<div class="ab" style="left:860px;top:584px;width:57px;height:17px;background:linear-gradient(#f0f0f0,#e5e5e5);border:1px solid #a8a8a8;border-top:none"></div>
<div class="t" style="top:584.58px;font-size:11.6px;left:865.2px;">Planning</div>
<div class="ab" style="left:916px;top:584px;width:71px;height:17px;background:linear-gradient(#f0f0f0,#e5e5e5);border:1px solid #a8a8a8;border-top:none"></div>
<div class="t" style="top:584.58px;font-size:11.6px;left:922.5px;">Comments</div>
<div class="ab" style="left:986px;top:584px;width:66px;height:17px;background:linear-gradient(#f0f0f0,#e5e5e5);border:1px solid #a8a8a8;border-top:none"></div>
<div class="t" style="top:584.58px;font-size:11.6px;left:992.2px;">Calculator</div>
<div class="ab" style="left:1051px;top:584px;width:118px;height:17px;background:linear-gradient(#f0f0f0,#e5e5e5);border:1px solid #a8a8a8;border-top:none"></div>
<div class="t" style="top:584.58px;font-size:11.6px;left:1056.9px;">Outstanding Orders</div>
<div class="ab" style="left:1168px;top:584px;width:100px;height:17px;background:linear-gradient(#f0f0f0,#e5e5e5);border:1px solid #a8a8a8;border-top:none"></div>
<div class="t" style="top:584.58px;font-size:11.6px;left:1174.5px;">File Attachments</div>
<div class="t" style="top:637.00px;font-size:11.7px;right:1581.5px;">Specifications</div>
<div class="ab" style="left:344px;top:608px;width:370px;height:70px;border:1px solid #acacac;background:#fff"></div>
<div class="ab" style="left:696px;top:609px;width:17px;height:68px;background:#f0f0f0"></div>
<div class="ab" style="left:696px;top:626px;width:17px;height:8px;background:#c2c2c2"></div>
<svg style="left:699px;top:615px" width="11" height="7" fill="none" stroke="#9a9a9a" stroke-width="1.3"><path d="M2 5.5 L5.5 2 L9 5.5"/></svg>
<svg style="left:699px;top:666px" width="11" height="7" fill="none" stroke="#9a9a9a" stroke-width="1.3"><path d="M2 1.5 L5.5 5 L9 1.5"/></svg>
<div class="t" style="top:612.18px;font-size:11.6px;left:347.7px;">"New Temporary tolerance (only for July):</div>
<div class="t" style="top:644.18px;font-size:11.6px;left:347.7px;">&bull; Open belly tolerance:</div>
<div class="t" style="top:660.18px;font-size:11.6px;left:347.7px;">o Not accept open belly portion bigger than 7cm in width</div>
<div class="t" style="top:718.01px;font-size:11.8px;right:1581px;">Custom Major Defects</div>
<div class="ab" style="left:344px;top:688px;width:370px;height:70px;border:1px solid #acacac;background:#fff"></div>
<div class="t" style="top:692.18px;font-size:11.6px;left:347.7px;">Presence of bone chips, cartilage, excessive blood clots, hair roots,</div>
<div class="t" style="top:708.18px;font-size:11.6px;left:347.7px;">infected mammary tissue and skin and infected mammary glands.</div>
<div class="t" style="top:724.18px;font-size:11.6px;left:347.7px;">Too thin bellies</div>
<div class="t" style="top:606.61px;font-size:11.8px;left:735px;">Custom specifications and defects are</div>
<div class="t" style="top:622.61px;font-size:11.8px;left:735px;">specific to this product code and will</div>
<div class="t" style="top:638.61px;font-size:11.8px;left:735px;">be added to the cut specification to</div>
<div class="t" style="top:654.61px;font-size:11.8px;left:735px;">form the overall product specification.</div>
<div class="t" style="top:771.84px;font-size:12px;font-weight:bold;right:1581px;">Minimum Hog Type</div>
<div class="ab" style="left:344px;top:766px;width:186px;height:23px;border:1px solid #c8c8c8;background:#ececec"></div>
<div class="t" style="top:772.18px;font-size:11.6px;left:350px;color:#222">Herb</div>
<svg style="left:517px;top:776px" width="7" height="4" fill="none" stroke="#9a9a9a" stroke-width="1"><path d="M0.5 0.5 L3.5 3.5 L6.5 0.5"/></svg>
<div class="t" style="top:801.84px;font-size:12px;font-weight:bold;right:1581px;">Gender</div>
<div class="ab" style="left:344px;top:796px;width:186px;height:23px;border:1px solid #c8c8c8;background:#ececec"></div>
<div class="t" style="top:802.18px;font-size:11.6px;left:350px;color:#222">Mixed</div>
<svg style="left:517px;top:806px" width="7" height="4" fill="none" stroke="#9a9a9a" stroke-width="1"><path d="M0.5 0.5 L3.5 3.5 L6.5 0.5"/></svg>
<div class="t" style="top:831.84px;font-size:12px;font-weight:bold;right:1581px;">Sizing</div>
<div class="ab" style="left:344px;top:826px;width:186px;height:23px;border:1px solid #c8c8c8;background:#ececec"></div>
<div class="t" style="top:832.18px;font-size:11.6px;left:350px;color:#222">Unsized</div>
<svg style="left:517px;top:836px" width="7" height="4" fill="none" stroke="#9a9a9a" stroke-width="1"><path d="M0.5 0.5 L3.5 3.5 L6.5 0.5"/></svg>
<div class="t" style="top:861.84px;font-size:12px;font-weight:bold;right:1581px;">Size Range</div>
<div class="ab" style="left:344px;top:856px;width:82px;height:23px;border:1px solid #c8c8c8;background:#fff"></div>
<div class="t" style="top:861.84px;font-size:12px;font-weight:bold;left:431.5px;">to</div>
<div class="ab" style="left:448px;top:856px;width:82px;height:23px;border:1px solid #c8c8c8;background:#fff"></div>
<div class="t" style="top:891.84px;font-size:12px;font-weight:bold;right:1581px;">Bones Count</div>
<div class="ab" style="left:344px;top:886px;width:186px;height:23px;border:1px solid #c8c8c8;background:#ececec"></div>
<div class="t" style="top:892.18px;font-size:11.6px;left:350px;color:#222">Any</div>
<svg style="left:517px;top:896px" width="7" height="4" fill="none" stroke="#9a9a9a" stroke-width="1"><path d="M0.5 0.5 L3.5 3.5 L6.5 0.5"/></svg>
<div class="t" style="top:921.84px;font-size:12px;font-weight:bold;right:1581px;">Count</div>
<div class="ab" style="left:344px;top:916px;width:186px;height:23px;border:1px solid #c8c8c8;background:#fff"></div>
<div class="ab" style="left:551px;top:771px;width:14px;height:14px;border:1px solid #bdbdbd;background:#e9e9e9"></div>
<svg style="left:552px;top:772px" width="12" height="12" fill="none" stroke="#505050" stroke-width="1.9"><path d="M2.2 6.2 L4.6 9.4 L10 1.8"/></svg>
<div class="t" style="top:772.27px;font-size:11.5px;font-weight:bold;left:569.8px;">Paylean Free</div>
<div class="ab" style="left:551px;top:801px;width:14px;height:14px;border:1px solid #bdbdbd;background:#e9e9e9"></div>
<div class="t" style="top:802.10px;font-size:11.7px;font-weight:bold;left:569.8px;">Sized Product</div>
<div class="ab" style="left:0px;top:982px;width:1920px;height:36px;background:#2a2f35"></div>
<div class="ab" style="left:0px;top:1016px;width:1920px;height:2px;background:#0b0d10"></div>
<svg style="left:15px;top:993px" width="13" height="13"><circle cx="6.5" cy="6.5" r="5.6" fill="#168a1c" stroke="#8a9a8c" stroke-width="0.7"/></svg>
<div class="t" style="top:993.74px;font-size:12px;left:32.2px;color:#fff">Connection status</div>
<div class="ab" style="left:137px;top:982px;width:1px;height:34px;background:#c4c8cc"></div>
<svg style="left:152px;top:990px" width="17" height="17" fill="#fff"><circle cx="8.5" cy="4.8" r="4.3"/><path d="M0.5 17 C0.5 11.5 3.5 10 8.5 10 C13.5 10 16.5 11.5 16.5 17 Z"/></svg>
<div class="t" style="top:993.74px;font-size:12px;left:172.5px;color:#fff">APP2\Administrator</div>
<div class="ab" style="left:287px;top:982px;width:1px;height:34px;background:#c4c8cc"></div>
</body></html>
